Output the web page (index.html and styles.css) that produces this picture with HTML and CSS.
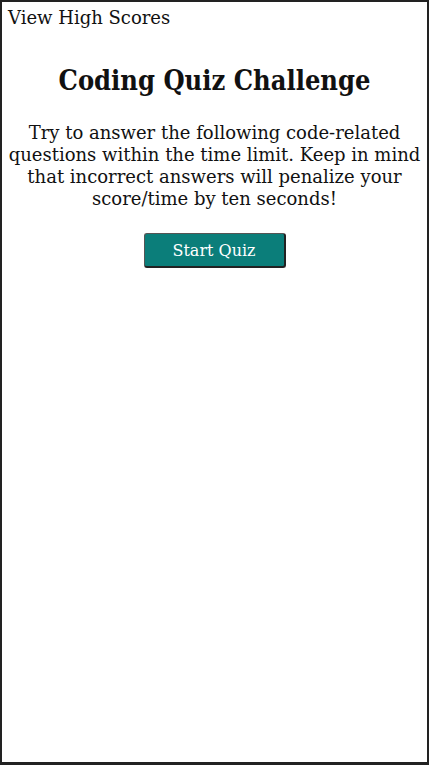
FILE: index.html
```html
<!DOCTYPE html>
<html lang="en">
<head>
<meta charset="utf-8">
<title>Coding Quiz Challenge</title>
<link rel="stylesheet" href="styles.css">
</head>
<body>
<div class="frame">
  <header class="topbar">
    <a class="scores-link" href="#">View High Scores</a>
  </header>
  <main class="intro">
    <h1 class="title">Coding Quiz Challenge</h1>
    <p class="desc">Try to answer the following code-related questions within the time limit. Keep in mind that incorrect answers will penalize your score/time by ten seconds!</p>
    <button class="start-btn" type="button">Start Quiz</button>
  </main>
</div>
</body>
</html>
```
FILE: styles.css
```css
html, body {
  margin: 0;
  padding: 0;
  background: #ffffff;
}
body {
  font-family: "DejaVu Serif", serif;
  color: #111;
}
.frame {
  box-sizing: border-box;
  width: 429px;
  height: 765px;
  border-top: 2px solid #222;
  border-left: 2px solid #222;
  border-right: 2px solid #222;
  border-bottom: 3px solid #222;
  padding: 0 6px;
}
.topbar {
  padding-top: 6px;
}
.scores-link {
  font-size: 18px;
  color: #111;
  text-decoration: none;
  line-height: 20px;
}
.intro {
  display: flex;
  flex-direction: column;
  align-items: center;
  text-align: center;
}
.title {
  margin: 35px 0 0;
  font-family: "DejaVu Serif Condensed", "DejaVu Serif", serif;
  font-stretch: condensed;
  font-size: 27px;
  font-weight: bold;
  line-height: 36px;
}
.desc {
  margin: 23px 0 0;
  font-size: 18px;
  line-height: 22px;
}
.start-btn {
  margin-top: 23px;
  width: 142px;
  height: 35px;
  background: #0b7e7a;
  color: #fff;
  border: 1px solid #555;
  border-right-width: 2px;
  border-bottom-width: 2px;
  border-bottom-color: #222;
  border-right-color: #222;
  border-radius: 3px;
  font-family: "DejaVu Serif", serif;
  font-size: 16px;
}
```
